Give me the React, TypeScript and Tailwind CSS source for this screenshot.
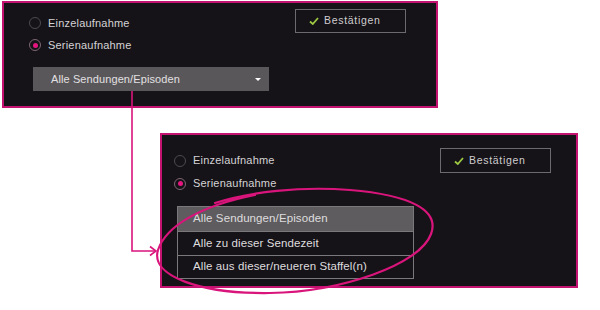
const font = "font-['Liberation_Sans',Arial,sans-serif]";

const Radio = ({ checked = false }: { checked?: boolean }) => (
  <span
    className={`w-[12px] h-[12px] rounded-full border flex items-center justify-center shrink-0 ${
      checked ? "border-[#7d6673]" : "border-[#4e4b50]"
    }`}
  >
    {checked && <span className="w-[5px] h-[5px] rounded-full bg-[#e5157f]" />}
  </span>
);

const RadioRow = ({ label, checked, h }: { label: string; checked?: boolean; h: string }) => (
  <div className={`flex items-center gap-[7px] ${h}`}>
    <Radio checked={checked} />
    <span className="text-[11px] tracking-[0.2px] text-[#d4d2d4]">{label}</span>
  </div>
);

const Check = () => (
  <svg width="10" height="8" viewBox="0 0 10 8" className="shrink-0">
    <polyline points="1,4.5 3.8,7 9,1" fill="none" stroke="#9cc842" strokeWidth="1.8" />
  </svg>
);

const ConfirmButton = ({ className = "" }: { className?: string }) => (
  <div
    className={`w-[111px] border border-[#6c6a6c] flex items-center pl-[13px] gap-[5px] shrink-0 ${className}`}
  >
    <Check />
    <span className="text-[10.5px] tracking-[0.7px] text-[#cfcdcf]">Bestätigen</span>
  </div>
);

export default function App() {
  return (
    <div className={`relative w-[600px] h-[310px] bg-white overflow-hidden ${font}`}>
      {/* top panel: closed dropdown */}
      <div className="ml-[2px] mt-[1px] w-[436px] h-[107px] border-2 border-[#c3126f] bg-[#161318] flex items-start">
        <div className="w-[265px] pl-[25px] pt-[9px] flex flex-col">
          <RadioRow label="Einzelaufnahme" h="h-[22px]" />
          <RadioRow label="Serienaufnahme" checked h="h-[22px]" />
          <div className="ml-[4px] mt-[11px] w-[236px] h-[24px] bg-[#5a575a] flex items-center justify-between pl-[18px] pr-[8px]">
            <span className="text-[11px] tracking-[0.1px] text-[#e2e0e2]">Alle Sendungen/Episoden</span>
            <span className="w-0 h-0 border-l-[3px] border-r-[3px] border-t-[3px] border-l-transparent border-r-transparent border-t-white" />
          </div>
        </div>
        <ConfirmButton className="ml-[26px] mt-[6px] h-[24px]" />
      </div>

      {/* bottom panel: opened list */}
      <div className="ml-[160px] mt-[25px] w-[418px] h-[155px] border-2 border-[#c3126f] bg-[#161318] flex items-start">
        <div className="w-[252px] pl-[12px] pt-[14px] flex flex-col">
          <RadioRow label="Einzelaufnahme" h="h-[23px]" />
          <RadioRow label="Serienaufnahme" checked h="h-[23px]" />
          <div className="ml-[3px] mt-[11px] w-[237px] border border-[#7a787a] flex flex-col text-[11.5px] tracking-[0.1px] text-[#dedcde]">
            <div className="h-[24px] bg-[#5e5c5e] flex items-center pl-[15px]">Alle Sendungen/Episoden</div>
            <div className="h-[24px] border-t border-[#7a787a] flex items-center pl-[15px]">Alle zu dieser Sendezeit</div>
            <div className="h-[23px] border-t border-[#7a787a] flex items-center pl-[15px]">Alle aus dieser/neueren Staffel(n)</div>
          </div>
        </div>
        <ConfirmButton className="ml-[26px] mt-[13px] h-[25px]" />
      </div>

      {/* annotations */}
      <svg className="absolute inset-0 pointer-events-none" width="600" height="310" viewBox="0 0 600 310">
        <polyline points="132,91 132,251 156,251" fill="none" stroke="#d9157c" strokeWidth="1.6" />
        <polyline points="150,246.5 156,251 150,255.5" fill="none" stroke="#d9157c" strokeWidth="1.6" />
        <path
          d="M 215,203 C 250,192 300,186 350,190 C 410,195 440,210 431,234 C 420,265 340,292 270,293 C 200,294 150,276 158,250 C 166,226 200,206 255,195"
          fill="none"
          stroke="#d9157c"
          strokeWidth="2.2"
          strokeLinecap="round"
        />
      </svg>
    </div>
  );
}
